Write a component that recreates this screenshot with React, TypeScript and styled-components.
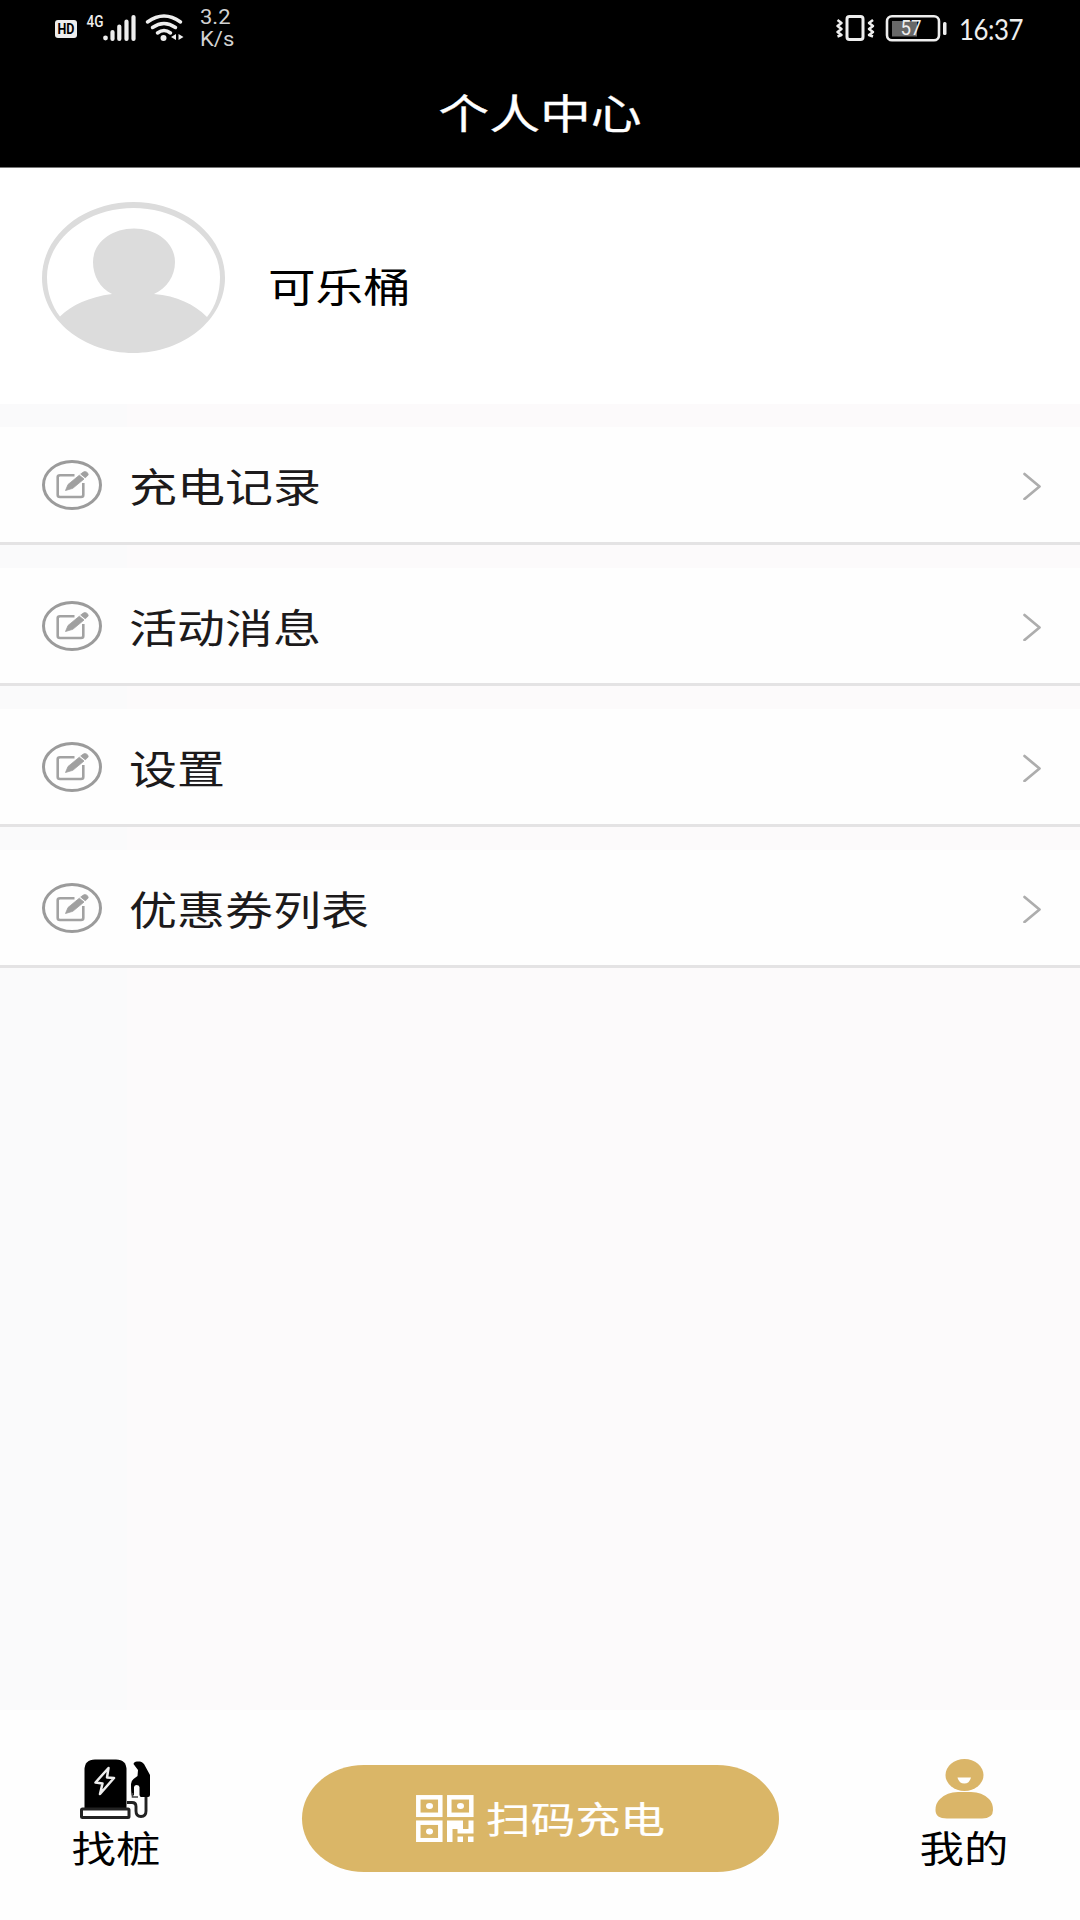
import React from "react";
import styled, { createGlobalStyle } from "styled-components";

const GlobalStyle = createGlobalStyle`
  * { box-sizing: border-box; }
  body { margin: 0; background: #fcfafb; font-family: "Liberation Sans", "Noto Sans CJK SC", sans-serif; }
  svg { display: block; flex: none; }
`;

const Screen = styled.main`
  width: 1080px;
  height: 1920px;
  display: flex;
  flex-direction: column;
  overflow: hidden;
  background: linear-gradient(90deg, #fafafb 0 127px, #fcfafb 127px);
`;

const StatusBar = styled.div`
  height: 60px;
  flex: none;
  display: flex;
  justify-content: space-between;
  background: #000;
  color: #eee;
`;

const Header = styled.header`
  height: 107px;
  flex: none;
  display: flex;
  justify-content: center;
  padding-top: 27px;
  background: #000;
  color: #fff;
`;

/* Wide lettering used throughout the app */
const Label = styled.span<{ $size: number; $wide?: number; $origin?: string; $stroke?: number; $color?: string }>`
  display: block;
  margin: 0;
  font-family: "Noto Sans CJK SC", sans-serif;
  font-size: ${(p) => p.$size}px;
  font-weight: 400;
  line-height: 48px;
  white-space: nowrap;
  color: ${(p) => p.$color ?? "#000"};
  -webkit-text-stroke: ${(p) => p.$stroke ?? 0}px currentColor;
  transform: scaleX(${(p) => p.$wide ?? 1.2});
  transform-origin: ${(p) => p.$origin ?? "left"} center;
`;

const Profile = styled.section`
  height: 237px;
  flex: none;
  display: flex;
  padding: 34px 0 0 42px;
  background: #fff;
  border-top: 1px solid #777;
`;

const ProfileName = styled.div`
  padding: 59px 0 0 43px;
`;

const Menu = styled.nav`
  flex: 1;
`;

const MenuItem = styled.a`
  height: 118px;
  margin-top: 23px;
  display: flex;
  align-items: center;
  padding: 0 38px 0 41px;
  background: #fefefe;
  border-bottom: 3px solid #e4e3e4;
`;

const MenuText = styled.div`
  flex: 1;
  padding: 1px 0 0 26px;
`;

const TabBar = styled.footer`
  height: 210px;
  flex: none;
  display: flex;
  justify-content: space-between;
  padding: 48px 66px 0;
  background: #fefefe;
`;

const Tab = styled.a`
  width: 100px;
  display: flex;
  flex-direction: column;
  align-items: center;
  gap: 3px;
`;

const ScanButton = styled.button`
  width: 477px;
  height: 107px;
  margin-top: 7px;
  border: 0;
  border-radius: 62px / 53.5px;
  background: #dab667;
  display: flex;
  padding: 29px 0 0 113px;
  gap: 12px;
`;

const StatusText = styled.span<{ $size: number; $lh: number; $wide?: number }>`
  display: block;
  font-family: Roboto, sans-serif;
  font-size: ${(p) => p.$size}px;
  font-weight: 400;
  line-height: ${(p) => p.$lh}px;
  transform: scaleX(${(p) => p.$wide ?? 1});
  transform-origin: left center;
`;

const StatusLeft = styled.div`
  display: flex;
  padding-left: 50px;
`;
const StatusRight = styled.div`
  display: flex;
  width: 250px;
`;
const Speed = styled.div`
  padding: 6px 0 0 10px;
  color: #d2d2d2;
`;
const Clock = styled.div`
  padding-top: 9px;
`;
const ClockText = styled(StatusText)`
  font-family: Lato, sans-serif;
  letter-spacing: -0.5px;
`;

const SignalIcons = () => (
  <svg width="140" height="60" viewBox="50 0 140 60">
    <rect x="55" y="20" width="22" height="18" rx="3" fill="#eee" />
    <text x="66" y="34.300" fontSize="14" fontWeight="700" fontFamily="Roboto" textAnchor="middle" fill="#000" textLength="17" lengthAdjust="spacingAndGlyphs">HD</text>
    <text x="86.500" y="27" fontSize="16" fontWeight="500" fontFamily="Roboto" textLength="17" lengthAdjust="spacingAndGlyphs" fill="#eee">4G</text>
    <circle cx="105.5" cy="38" r="2.4" fill="#eee" />
    <path d="M112.5 32V39M119.3 26.5V39M126.5 21.5V39M133.5 17V39" stroke="#eee" strokeWidth="4.2" strokeLinecap="round" />
    <g fill="none" stroke="#eee" strokeWidth="3.5" strokeLinecap="round">
      <path d="M147.5 22Q164 10 180.500 22" />
      <path d="M152.500 27.500Q164 19.500 175.500 27.500" />
      <path d="M157.500 33Q164 28 170.500 33" />
    </g>
    <circle cx="163.500" cy="38" r="3" fill="#eee" />
    <path d="M176 34v6l-5-3zM178.500 34v6l5-3z" fill="#eee" />
  </svg>
);

const BatteryIcons = () => (
  <svg width="129" height="60" viewBox="830 0 129 60">
    <g fill="none" stroke="#eee" strokeWidth="2.5" strokeLinejoin="round">
      <rect x="847" y="16.500" width="16" height="23" rx="2.500" strokeWidth="3" />
      <path d="M837.500 20l4 3-4 3 4 3-4 3 4 3-4 1.500M873 20l-4 3 4 3-4 3 4 3-4 3 4 1.500" />
      <rect x="887" y="16.300" width="52" height="24" rx="5" strokeWidth="2.600" />
    </g>
    <rect x="892" y="21" width="25" height="15.500" fill="#686868" />
    <rect x="943" y="22" width="3.500" height="13" rx="1.500" fill="#eee" />
    <text x="911" y="35" fontSize="21" fontFamily="Roboto" textAnchor="middle" fill="#eee" textLength="21" lengthAdjust="spacingAndGlyphs">57</text>
  </svg>
);

const Avatar = () => (
  <svg width="183" height="153" viewBox="42 202 183 153">
    <path fillRule="evenodd" fill="#dcdcdc" d="M133.500 202C183 202 225 235 225 278C225 320 183 353 133.500 353C84 353 42 320 42 278C42 235 84 202 133.500 202ZM133.500 208C87 208 47 239 47 277C47 293 52 306 60 316.500C72 305 89 297 112 294C100 288 93 276 93 262C93 243 111 228.500 134 228.500C157 228.500 175 243 175 262C175 276 167 288 154 294C177 296 194 304 207 317C216 306 220 292 220 277C220 239 180 208 133.500 208Z" />
  </svg>
);

const EditIcon = () => (
  <svg width="62" height="52" viewBox="41 459 62 52">
    <ellipse cx="72" cy="485" rx="28.500" ry="23.500" fill="none" stroke="#9b9b9b" strokeWidth="3" />
    <path d="M74.500 475.300H60Q57.700 475.300 57.700 477V495Q57.700 497 60 497H81Q83.300 497 83.300 495V483" fill="none" stroke="#a2a2a2" strokeWidth="2.600" />
    <path d="M65.500 490.500L68 484.500L79.300 475.200L84 479L72.800 488.300ZM80.700 474L83 472.300Q84.500 471 86.500 472L88 473.400Q88.700 474.700 87.300 476L85.200 477.700Z" fill="#a0a0a0" stroke="#a0a0a0" strokeWidth="0.800" />
  </svg>
);

const Chevron = () => (
  <svg width="20" height="30" viewBox="0 0 20 30">
    <path d="M2.500 4L17.500 16.500L2.500 29" fill="none" stroke="#adadad" strokeWidth="2.700" strokeLinecap="round" strokeLinejoin="round" />
  </svg>
);

const ChargerIcon = () => (
  <svg width="72" height="62" viewBox="80 1758 72 62">
    <path d="M84.500 1809V1770Q84.500 1759.500 95 1759.500H116Q126.500 1759.500 126.500 1770V1809Z" />
    <rect x="81.500" y="1809" width="47.500" height="8.500" rx="1" fill="#fff" stroke="#222" strokeWidth="3" />
    <path d="M108.500 1768L95.500 1782.500L102.500 1783.500L100 1794L114 1778L107 1777.500Z" fill="none" stroke="#eee" strokeWidth="2.500" strokeLinejoin="round" />
    <path d="M127 1802.500H132Q136 1802.500 136 1806.500V1811Q136 1816.500 141 1816.500Q146 1816.500 146 1811V1796" fill="none" stroke="#222" strokeWidth="2.900" />
    <path d="M133.500 1764Q134 1761.500 137 1761.500H140Q142 1761.500 144 1764L150 1775V1795Q150 1797 148 1797H141Q140 1797 139.500 1795V1787Q139 1785 136.500 1785Q134.500 1785 134 1787V1795L132 1796Q131 1794 131 1784Q131 1781 133.500 1779L137.500 1776L138 1770Z" />
    <path d="M132.500 1793V1797H138" fill="none" stroke="#444" strokeWidth="1.600" />
  </svg>
);

const PersonIcon = () => (
  <svg width="60" height="62" viewBox="934 1758 60 62">
    <ellipse cx="964.500" cy="1775" rx="19" ry="16" fill="#dab568" />
    <path d="M935.500 1810Q935.500 1803 940 1799Q947 1792 958 1792H971Q982 1792 989 1799Q993 1803 993 1810Q993 1818.500 982 1818.500H947Q935.500 1818.500 935.500 1810Z" fill="#dab568" />
    <path d="M957.500 1777.500H971Q969.500 1783.500 964.300 1783.500Q959 1783.500 957.500 1777.500Z" fill="#fff" />
  </svg>
);

const QrIcon = () => (
  <svg width="59" height="48" viewBox="414 1794 59 48">
    <g fill="none" stroke="#fff" strokeWidth="4.500">
      <rect x="417.300" y="1797.300" width="22" height="17.500" />
      <rect x="448.300" y="1797.300" width="22" height="17.500" />
      <rect x="417.300" y="1822.700" width="22" height="17.500" />
    </g>
    <g fill="#fff">
      <ellipse cx="428.500" cy="1806" rx="3.500" ry="3" />
      <ellipse cx="459.500" cy="1806" rx="3.500" ry="3" />
      <ellipse cx="428.500" cy="1831.500" rx="3.500" ry="3" />
      <path d="M446 1820.500H462V1829H467.500V1820.500H472.500V1833.500H456.500V1829H451.500V1842H446ZM456.500 1836.500H462V1842H456.500ZM467 1836.500H472.500V1842H467Z" />
    </g>
  </svg>
);

const menuItems = ["充电记录", "活动消息", "设置", "优惠券列表"];

export default function App() {
  return (
    <>
      <GlobalStyle />
      <Screen>
        <StatusBar>
          <StatusLeft>
            <SignalIcons />
            <Speed>
              <StatusText $size={20} $lh={22} $wide={1.1}>3.2</StatusText>
              <StatusText $size={20} $lh={22} $wide={1.1}>K/s</StatusText>
            </Speed>
          </StatusLeft>
          <StatusRight>
            <BatteryIcons />
            <Clock>
              <ClockText $size={29} $lh={40} $wide={0.89}>16:37</ClockText>
            </Clock>
          </StatusRight>
        </StatusBar>
        <Header>
          <Label as="h1" $size={41} $wide={1.24} $origin="center" $color="#fff" $stroke={0.3}>个人中心</Label>
        </Header>
        <Profile>
          <Avatar />
          <ProfileName>
            <Label $size={40} $wide={1.19}>可乐桶</Label>
          </ProfileName>
        </Profile>
        <Menu>
          {menuItems.map((text) => (
            <MenuItem key={text}>
              <EditIcon />
              <MenuText>
                <Label $size={40} $color="#1c1a1b">{text}</Label>
              </MenuText>
              <Chevron />
            </MenuItem>
          ))}
        </Menu>
        <TabBar>
          <Tab>
            <ChargerIcon />
            <Label $size={37} $origin="center">找桩</Label>
          </Tab>
          <ScanButton>
            <QrIcon />
            <Label $size={37} $wide={1.21} $color="#fff" $stroke={0.2}>扫码充电</Label>
          </ScanButton>
          <Tab>
            <PersonIcon />
            <Label $size={37} $origin="center">我的</Label>
          </Tab>
        </TabBar>
      </Screen>
    </>
  );
}
